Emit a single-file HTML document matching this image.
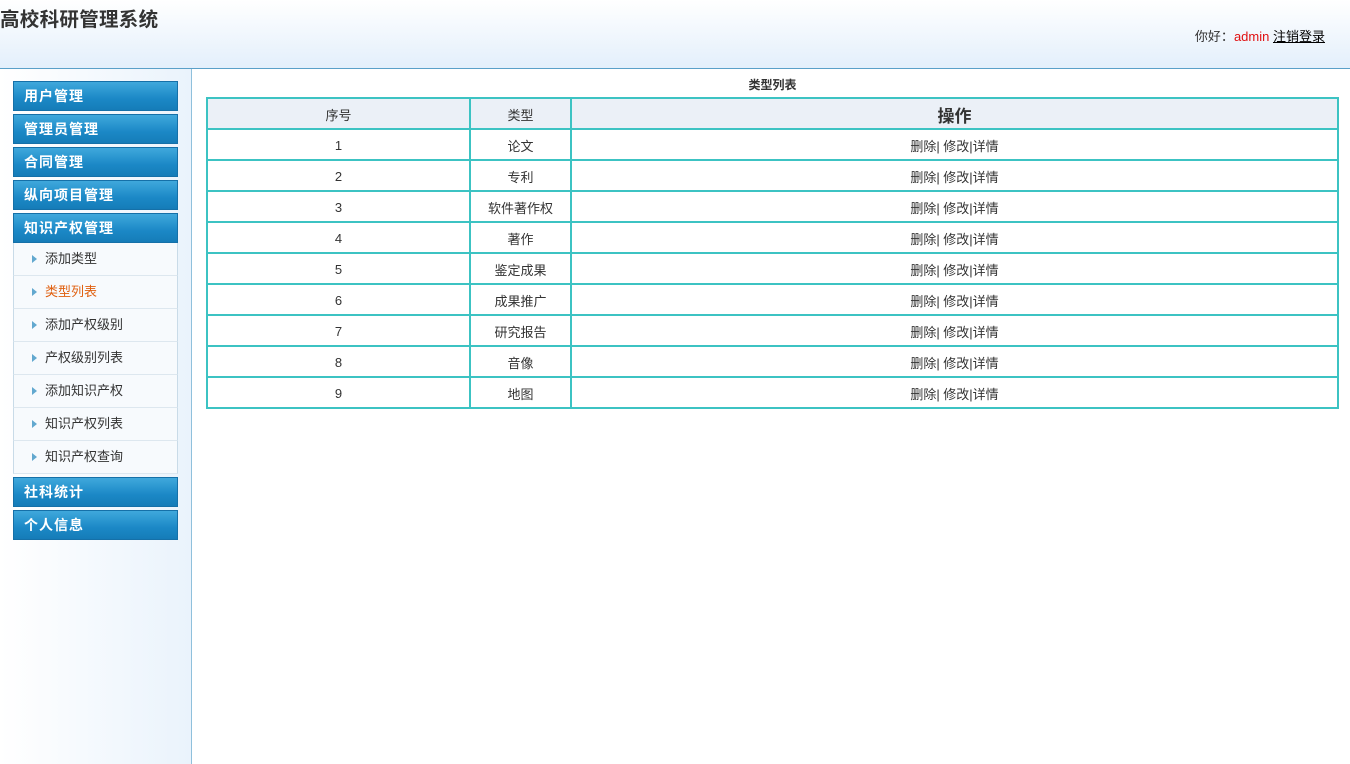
<!DOCTYPE html>
<html><head><meta charset="utf-8"><style>
*{margin:0;padding:0;box-sizing:border-box}
body{width:1350px;height:764px;font-family:"Liberation Sans","Noto Sans CJK SC",sans-serif;font-size:13px;color:#333;background:#fff;position:relative;overflow:hidden}
.hd{position:absolute;left:0;top:0;width:1350px;height:69px;background:linear-gradient(#fff,#e3effb);border-bottom:1px solid #5aa0c8}
.hd h1{position:absolute;left:0;top:3px;font-size:19.5px;font-weight:bold;color:#333;letter-spacing:0.3px}
.hd .u{position:absolute;right:25px;top:26px;font-size:13px;color:#333}
.hd .u span{color:#e01010}.hd .u a{color:#000;text-decoration:underline}
.sb{position:absolute;left:0;top:69px;width:192px;height:695px;background:linear-gradient(90deg,#fff,#eaf3fc);border-right:1px solid #8fc0dc}
.m{position:absolute;left:13px;width:165px;height:30px;background:linear-gradient(#3fa8dc,#1b88c6 60%,#157cb8);border:1px solid #1570a8;color:#fff;font-weight:bold;font-size:14px;line-height:29px;padding-left:10px;letter-spacing:1px}
.s{position:absolute;left:13px;width:165px;height:33px;border-left:1px solid #c9dbe8;border-right:1px solid #c9dbe8;border-bottom:1px solid #dde7ef;background:#f7fafd;line-height:32px;padding-left:31px;font-size:13px;color:#333}
.s:before{content:"";position:absolute;left:18px;top:12px;border-left:5px solid #62a8cf;border-top:4px solid transparent;border-bottom:4px solid transparent}
.s.on{color:#e06010}
.cap{position:absolute;left:206px;width:1133px;top:76px;text-align:center;font-size:12px;font-weight:bold;color:#333}
table{position:absolute;left:206px;top:97px;width:1133px;border-collapse:collapse}
td,th{border:2px solid #3cc3c3;height:31px;text-align:center;font-size:13px;font-weight:normal;color:#333;padding-top:1px}
th{background:#ebf0f7}
th.b{font-size:17px;font-weight:bold}
</style></head><body>
<div class="hd"><h1>高校科研管理系统</h1><div class="u">你好：<span>admin</span> <a>注销登录</a></div></div>
<div class="sb"></div>
<div class="m" style="top:81px">用户管理</div>
<div class="m" style="top:114px">管理员管理</div>
<div class="m" style="top:147px">合同管理</div>
<div class="m" style="top:180px">纵向项目管理</div>
<div class="m" style="top:213px">知识产权管理</div>
<div class="s" style="top:243px">添加类型</div>
<div class="s on" style="top:276px">类型列表</div>
<div class="s" style="top:309px">添加产权级别</div>
<div class="s" style="top:342px">产权级别列表</div>
<div class="s" style="top:375px">添加知识产权</div>
<div class="s" style="top:408px">知识产权列表</div>
<div class="s" style="top:441px">知识产权查询</div>
<div class="m" style="top:477px">社科统计</div>
<div class="m" style="top:510px">个人信息</div>
<div class="cap">类型列表</div>
<table>
<tr><th style="width:263px">序号</th><th style="width:101px">类型</th><th class="b">操作</th></tr>
<tr><td>1</td><td>论文</td><td>删除| 修改|详情</td></tr>
<tr><td>2</td><td>专利</td><td>删除| 修改|详情</td></tr>
<tr><td>3</td><td>软件著作权</td><td>删除| 修改|详情</td></tr>
<tr><td>4</td><td>著作</td><td>删除| 修改|详情</td></tr>
<tr><td>5</td><td>鉴定成果</td><td>删除| 修改|详情</td></tr>
<tr><td>6</td><td>成果推广</td><td>删除| 修改|详情</td></tr>
<tr><td>7</td><td>研究报告</td><td>删除| 修改|详情</td></tr>
<tr><td>8</td><td>音像</td><td>删除| 修改|详情</td></tr>
<tr><td>9</td><td>地图</td><td>删除| 修改|详情</td></tr>
</table>
</body></html>
